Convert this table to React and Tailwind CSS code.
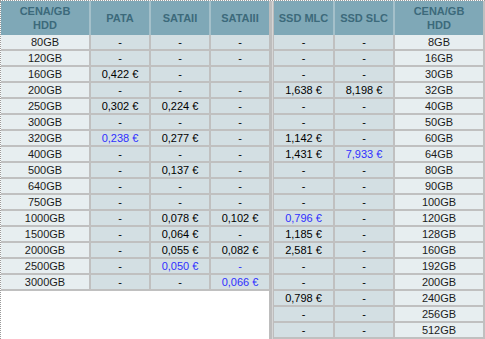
const dash = "-";

const leftRows = [
  ["80GB", dash, dash, dash],
  ["120GB", dash, dash, dash],
  ["160GB", "0,422 €", dash, ""],
  ["200GB", dash, dash, dash],
  ["250GB", "0,302 €", "0,224 €", dash],
  ["300GB", dash, dash, dash],
  ["320GB", "*0,238 €", "0,277 €", dash],
  ["400GB", dash, dash, dash],
  ["500GB", dash, "0,137 €", dash],
  ["640GB", dash, dash, dash],
  ["750GB", dash, dash, dash],
  ["1000GB", dash, "0,078 €", "0,102 €"],
  ["1500GB", dash, "0,064 €", dash],
  ["2000GB", dash, "0,055 €", "0,082 €"],
  ["2500GB", dash, "*0,050 €", "*-"],
  ["3000GB", dash, dash, "*0,066 €"],
];

const rightRows = [
  ["8GB", dash, dash],
  ["16GB", dash, dash],
  ["30GB", dash, dash],
  ["32GB", "1,638 €", "8,198 €"],
  ["40GB", dash, dash],
  ["50GB", dash, dash],
  ["60GB", "1,142 €", dash],
  ["64GB", "1,431 €", "*7,933 €"],
  ["80GB", dash, dash],
  ["90GB", dash, dash],
  ["100GB", dash, dash],
  ["120GB", "*0,796 €", dash],
  ["128GB", "1,185 €", dash],
  ["160GB", "2,581 €", dash],
  ["192GB", dash, dash],
  ["200GB", dash, dash],
  ["240GB", "0,798 €", dash],
  ["256GB", dash, dash],
  ["512GB", dash, dash],
];

// values prefixed with * are the cheapest ones, shown in blue
function Value({ v }) {
  if (v.startsWith("*")) {
    return <span className="text-[#2f2fff]">{v.slice(1)}</span>;
  }
  return <span>{v}</span>;
}

function HeadCell({ width, last, children }) {
  return (
    <div
      className={`${width} h-[34px] flex items-center justify-center text-center font-bold leading-[14px] text-[#3c6a7b] ${
        last ? "" : "border-r-2 border-[#a4c0ca]"
      }`}
    >
      {children}
    </div>
  );
}

function Cell({ width, light, last, children }) {
  return (
    <div
      className={`${width} h-4 leading-[14px] text-center border-b-2 border-[#c0c0c0] ${
        last ? "" : "border-r-2"
      } ${light ? "bg-[#e7eef0] text-[#1c1c1c]" : "bg-[#d3dfe3] text-black"}`}
    >
      {children}
    </div>
  );
}

export default function App() {
  return (
    <div
      className="w-[485px] h-[339px] bg-white flex border-t border-dotted border-[#9a9a9a] text-[11px] overflow-hidden"
      style={{ fontFamily: '"Liberation Sans", Arial, sans-serif' }}
    >
      {/* left table: HDD */}
      <div className="w-[269px] flex flex-col border-l border-dotted border-[#9a9a9a]">
        <div className="flex bg-[#7fa8b7]">
          <HeadCell width="w-[90px]">
            CENA/GB
            <br />
            HDD
          </HeadCell>
          <HeadCell width="w-[60px]">PATA</HeadCell>
          <HeadCell width="w-[60px]">SATAII</HeadCell>
          <HeadCell width="w-[58px]" last>
            SATAIII
          </HeadCell>
        </div>
        {leftRows.map((r) => (
          <div key={r[0]} className="flex">
            <Cell width="w-[90px]" light>
              {r[0]}
            </Cell>
            <Cell width="w-[60px]">
              <Value v={r[1]} />
            </Cell>
            <Cell width="w-[60px]">
              <Value v={r[2]} />
            </Cell>
            <Cell width="w-[58px]" last>
              <Value v={r[3]} />
            </Cell>
          </div>
        ))}
      </div>

      {/* separator between the two tables */}
      <div className="w-[5px] flex">
        <div className="w-[3px] bg-[#bdbdbd]" />
        <div className="w-px bg-[#d6d6d6]" />
        <div className="w-px bg-[#bdbdbd]" />
      </div>

      {/* right table: SSD */}
      <div className="flex-1 flex flex-col border-r-2 border-[#c0c0c0]">
        <div className="flex bg-[#7fa8b7]">
          <HeadCell width="w-[61px]">SSD MLC</HeadCell>
          <HeadCell width="w-[60px]">SSD SLC</HeadCell>
          <HeadCell width="flex-1" last>
            CENA/GB
            <br />
            HDD
          </HeadCell>
        </div>
        {rightRows.map((r) => (
          <div key={r[0]} className="flex">
            <Cell width="w-[61px]">
              <Value v={r[1]} />
            </Cell>
            <Cell width="w-[60px]">
              <Value v={r[2]} />
            </Cell>
            <Cell width="flex-1" light last>
              {r[0]}
            </Cell>
          </div>
        ))}
      </div>
    </div>
  );
}
